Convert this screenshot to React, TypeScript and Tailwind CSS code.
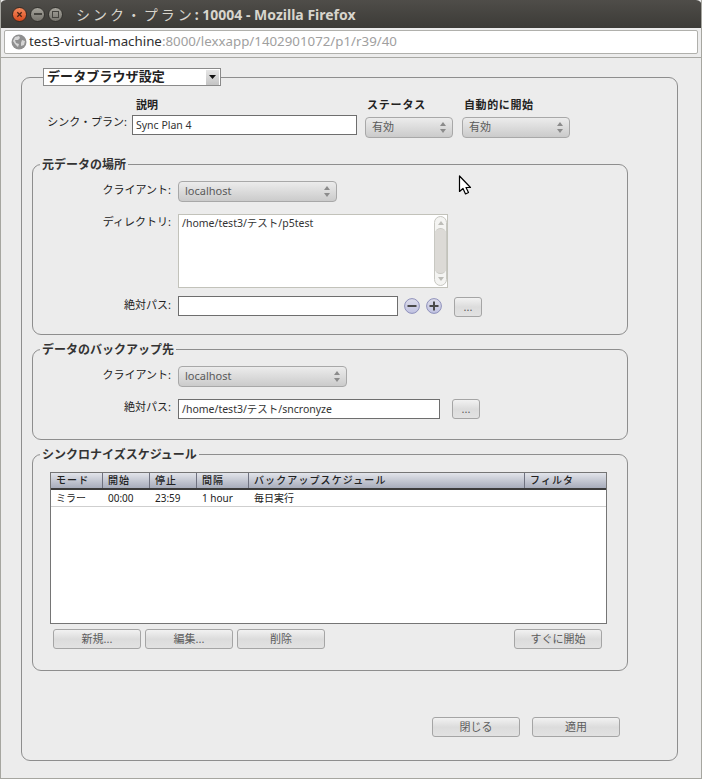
import React from "react";

const ui = { fontFamily: '"Noto Sans","Noto Sans CJK JP",sans-serif' };

function Btn({ label, w = "w-[88px]" }: { label: string; w?: string }) {
  return (
    <button className={`${w} h-[20px] rounded-[3px] border border-[#a5a5a5] bg-gradient-to-b from-[#f2f2f2] via-[#dcdcdc] to-[#e2e2e2] text-[11px] leading-[18px] text-[#5c5c5c] flex items-center justify-center shrink-0`}>
      {label}
    </button>
  );
}

function Spin() {
  return (
    <svg width="8" height="13" viewBox="0 0 8 13" className="shrink-0">
      <path d="M4 1 L7 5 H1 Z" fill="#8b8b8b" />
      <path d="M4 12 L7 8 H1 Z" fill="#8b8b8b" />
    </svg>
  );
}

function Select({ label, w, h = "h-[21px]" }: { label: string; w: string; h?: string }) {
  return (
    <div className={`${w} ${h} rounded-[4px] border border-[#a8a8a8] bg-gradient-to-b from-[#ececec] to-[#cbcbcb] flex items-center justify-between pl-[6px] pr-[5px] text-[11px] text-[#5a5a5a] shrink-0`}>
      <span>{label}</span>
      <Spin />
    </div>
  );
}

function Round({ plus }: { plus?: boolean }) {
  return (
    <svg width="16" height="16" viewBox="0 0 16 16" className="shrink-0">
      <defs>
        <linearGradient id={plus ? "rp" : "rm"} x1="0" y1="0" x2="0" y2="1">
          <stop offset="0" stopColor="#dedeea" />
          <stop offset="1" stopColor="#c0c2e2" />
        </linearGradient>
      </defs>
      <circle cx="8" cy="8" r="7.4" fill={`url(#${plus ? "rp" : "rm"})`} stroke="#8f91bb" strokeWidth="1" />
      <rect x="3.5" y="7" width="9" height="2" fill="#4a4a4a" />
      {plus && <rect x="7" y="3.5" width="2" height="9" fill="#4a4a4a" />}
    </svg>
  );
}

function Label({ children, cls = "" }: { children: React.ReactNode; cls?: string }) {
  return <div className={`w-[138px] text-right text-[11px] leading-[14px] text-[#222] shrink-0 ${cls}`}>{children}</div>;
}

function Group({ title, h, children }: { title: string; h: string; children: React.ReactNode }) {
  return (
    <fieldset className={`w-[596px] ${h} border border-[#8e8e8e] rounded-[9px] pl-0`}>
      <legend className="ml-[7px] px-[2px] text-[12px] leading-[15px] font-bold text-[#333]">{title}</legend>
      {children}
    </fieldset>
  );
}

const cols = ["w-[52px]", "w-[47px]", "w-[47px]", "w-[52px]", "w-[276px]", "flex-1"];
const heads = ["モード", "開始", "停止", "間隔", "バックアップスケジュール", "フィルタ"];
const cells = ["ミラー", "00:00", "23:59", "1 hour", "毎日実行", ""];

export default function App() {
  return (
    <div className="w-[702px] h-[779px] relative flex flex-col overflow-hidden bg-[#ececec] border-x border-b border-[#a6a6a0]" style={ui}>
      <div className="h-[28px] shrink-0 -mx-px rounded-t-[6px] bg-gradient-to-b from-[#4f4d49] to-[#3c3b37] flex items-center pl-[12px] gap-[3px]">
        <div className="w-[15px] h-[15px] rounded-full bg-gradient-to-b from-[#f58a5c] to-[#d8491b] border border-[#3a2a22] flex items-center justify-center">
          <svg width="7" height="7" viewBox="0 0 8 8"><path d="M1.5 1.5 L6.5 6.5 M6.5 1.5 L1.5 6.5" stroke="#4a2415" strokeWidth="1.5" /></svg>
        </div>
        <div className="w-[15px] h-[15px] rounded-full bg-gradient-to-b from-[#a5a39b] to-[#77756e] border border-[#33322e] flex items-center justify-center">
          <div className="w-[8px] h-[2px] bg-[#45443f]" />
        </div>
        <div className="w-[15px] h-[15px] rounded-full bg-gradient-to-b from-[#a5a39b] to-[#77756e] border border-[#33322e] flex items-center justify-center">
          <div className="w-[7px] h-[7px] border border-[#45443f]" />
        </div>
        <div className="ml-[10px] text-[14px] font-bold text-[#d8d5cd] whitespace-nowrap">
          <span className="font-normal tracking-[3px]">シンク・プラン</span>: 10004 - Mozilla Firefox
        </div>
      </div>

      <div className="h-[30px] shrink-0 border-b border-[#a8a8a4] pt-[2px] px-[3px]">
        <div className="w-[694px] h-[24px] bg-white border border-[#b0b0ac] rounded-[2px] flex items-center pl-[6px] gap-[2px] text-[13.3px] whitespace-nowrap">
          <svg width="16" height="16" viewBox="0 0 16 16" className="shrink-0">
            <circle cx="8" cy="8" r="7.5" fill="#8f8f8f" />
            <path d="M4 3 L8 2 L9 4 L7 6 L4 6 L5 9 L8 10 L7 13 L4 10 L2 7 Z M11 6 L14 7 L13 11 L10 12 L10 9 Z" fill="#d6d6d6" />
          </svg>
          <span><span className="text-[#2f2f2f]">test3-virtual-machine</span><span className="text-[#a0a0a0]">:8000/lexxapp/1402901072/p1/r39/40</span></span>
        </div>
      </div>

      <div className="flex-1 pt-[10px] pl-[20px]">
        <fieldset className="w-[657px] h-[693px] border border-[#8e8e8e] rounded-[9px]">
          <legend className="ml-[21px] w-[178px] h-[18px] bg-white border border-[#8a8a8a] flex items-center justify-between pl-[3px] pr-[1px] text-[13px] font-bold tracking-[0.1px] text-[#222]">
            <span>データブラウザ設定</span>
            <span className="w-[13px] h-[15px] bg-gradient-to-b from-[#e6e6e6] to-[#c4c4c4] flex items-center justify-center">
              <svg width="7" height="4" viewBox="0 0 7 4"><path d="M0 0 H7 L3.5 4 Z" fill="#111" /></svg>
            </span>
          </legend>

          <div className="pl-[10px]">
            {/* top row */}
            <div className="flex items-end pt-[12px] pl-0">
              <div className="w-[95px] text-right text-[11px] leading-[14px] text-[#222] pb-[9px] shrink-0">シンク・プラン:</div>
              <div className="ml-[5px] w-[225px] shrink-0 mb-[3px]">
                <div className="pl-[4px] mb-[3px] text-[11px] leading-[14px] font-bold text-[#222]">説明</div>
                <div className="h-[20px] bg-white border border-[#6e6e6e] pl-[3px] text-[10.5px] leading-[18px] text-[#333]">Sync Plan 4</div>
              </div>
              <div className="ml-[8px] w-[88px] shrink-0">
                <div className="pl-[2px] mb-[5px] text-[11px] leading-[14px] font-bold tracking-[0.8px] text-[#222]">ステータス</div>
                <Select label="有効" w="w-[88px]" />
              </div>
              <div className="ml-[9px] w-[108px] shrink-0">
                <div className="pl-[2px] mb-[5px] text-[11px] leading-[14px] font-bold tracking-[0.6px] text-[#222]">自動的に開始</div>
                <Select label="有効" w="w-[108px]" />
              </div>
            </div>

            <div className="flex flex-col gap-[7px] mt-[19px]">
              <Group title="元データの場所" h="h-[178px]">
                <div className="flex items-center mt-[9px]">
                  <Label cls="-mt-[3px]">クライアント:</Label>
                  <div className="ml-[7px]"><Select label="localhost" w="w-[159px]" /></div>
                </div>
                <div className="flex mt-[12px]">
                  <Label cls="pt-[1px]">ディレクトリ:</Label>
                  <div className="ml-[7px] w-[270px] h-[74px] bg-white border border-[#c2c2ba] flex justify-between">
                    <div className="pl-[3px] pt-[1px] text-[10.5px] leading-[14px] text-[#333]">/home/test3/テスト/p5test</div>
                    <div className="w-[13px] my-px rounded-full border border-[#c8c8c2] bg-[#f4f4f2] flex flex-col items-center justify-between">
                      <svg width="8" height="10" viewBox="0 0 8 10" className="shrink-0"><path d="M4 4 L7 8 H1 Z" fill="#bdbdb8" /></svg>
                      <div className="w-full h-[46px] rounded-full bg-[#dcdad6] border-y border-[#c8c8c2]" />
                      <svg width="8" height="10" viewBox="0 0 8 10" className="shrink-0"><path d="M4 6 L7 2 H1 Z" fill="#bdbdb8" /></svg>
                    </div>
                  </div>
                </div>
                <div className="flex items-center mt-[7px]">
                  <Label cls="-mt-[3px]">絶対パス:</Label>
                  <div className="ml-[7px] w-[220px] h-[20px] bg-white border border-[#6e6e6e] shrink-0" />
                  <div className="ml-[6px]"><Round /></div>
                  <div className="ml-[6px]"><Round plus /></div>
                  <div className="ml-[12px] mt-[2px]"><Btn label="..." w="w-[28px]" /></div>
                </div>
              </Group>

              <Group title="データのバックアップ先" h="h-[98px]">
                <div className="flex items-center mt-[9px]">
                  <Label cls="-mt-[3px]">クライアント:</Label>
                  <div className="ml-[7px]"><Select label="localhost" w="w-[169px]" /></div>
                </div>
                <div className="flex items-center mt-[11px]">
                  <Label cls="-mt-[3px]">絶対パス:</Label>
                  <div className="ml-[7px] w-[262px] h-[20px] bg-white border border-[#6e6e6e] pl-[3px] text-[10.5px] leading-[18px] text-[#333] shrink-0">/home/test3/テスト/sncronyze</div>
                  <div className="ml-[12px] mt-[1px]"><Btn label="..." w="w-[28px]" /></div>
                </div>
              </Group>

              <Group title="シンクロナイズスケジュール" h="h-[224px]">
                <div className="ml-[17px] mt-[10px] w-[557px] h-[152px] bg-white border border-[#757575]">
                  <div className="h-[17px] flex border-b-2 border-[#3c3c3c] bg-gradient-to-b from-[#e2e4ea] to-[#a8adbc]">
                    {heads.map((t, i) => (
                      <div key={t} className={`${cols[i]} shrink-0 pl-[5px] text-[10px] leading-[14px] tracking-[1.1px] font-medium text-[#222] whitespace-nowrap ${i < 5 ? "border-r border-[#6f7280]" : ""}`}>{t}</div>
                    ))}
                  </div>
                  <div className="h-[17px] flex border-b border-[#cfcfcf]">
                    {cells.map((t, i) => (
                      <div key={i} className={`${cols[i]} shrink-0 pl-[5px] text-[10px] leading-[17px] text-[#222] whitespace-nowrap`}>{t}</div>
                    ))}
                  </div>
                </div>
                <div className="flex ml-[20px] mt-[5px] w-[549px] justify-between">
                  <div className="flex gap-[4px]">
                    <Btn label="新規..." />
                    <Btn label="編集..." />
                    <Btn label="削除" />
                  </div>
                  <Btn label="すぐに開始" />
                </div>
              </Group>
            </div>

            <div className="flex gap-[12px] ml-[400px] mt-[46px]">
              <Btn label="閉じる" />
              <Btn label="適用" />
            </div>
          </div>
        </fieldset>
      </div>

      <svg width="14" height="21" viewBox="0 0 14 21" className="absolute left-[457px] top-[175px]">
        <path d="M1.5 1 V16.5 L5 13.5 L7.5 19 L10.5 17.5 L8 12.5 H12.5 Z" fill="#fff" stroke="#000" strokeWidth="1.2" strokeLinejoin="round" />
      </svg>
    </div>
  );
}
